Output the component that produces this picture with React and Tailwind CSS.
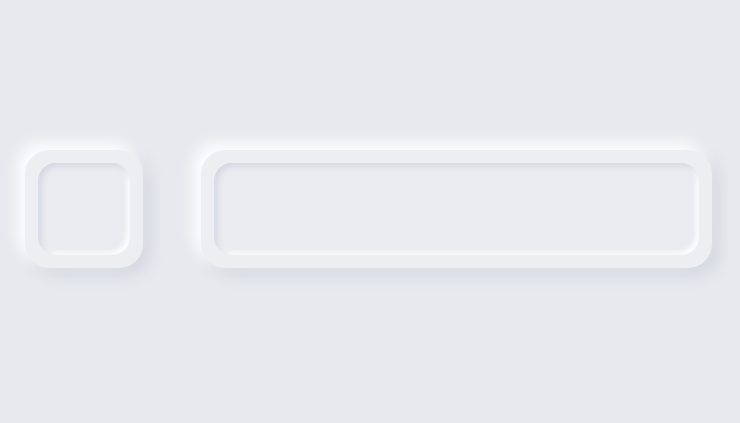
import React from 'react'

function Tile({ className }) {
  return (
    <div className={`rounded-[24px] bg-[#eceef2] p-[13px] shadow-[-7px_-7px_16px_#ffffff,7px_7px_16px_#d2d6de] ${className}`}>
      <div className="h-full w-full rounded-[18px] bg-[#e9ebf0] shadow-[inset_3px_3px_6px_#d3d7df,inset_-3px_-3px_5px_#ffffff]" />
    </div>
  )
}

export default function App() {
  return (
    <div className="min-h-[423px] w-full bg-[#e7e9ee] pl-[25px] pt-[150px]">
      <div className="flex gap-[58px]">
        <Tile className="h-[118px] w-[118px]" />
        <Tile className="h-[118px] w-[511px]" />
      </div>
    </div>
  )
}
